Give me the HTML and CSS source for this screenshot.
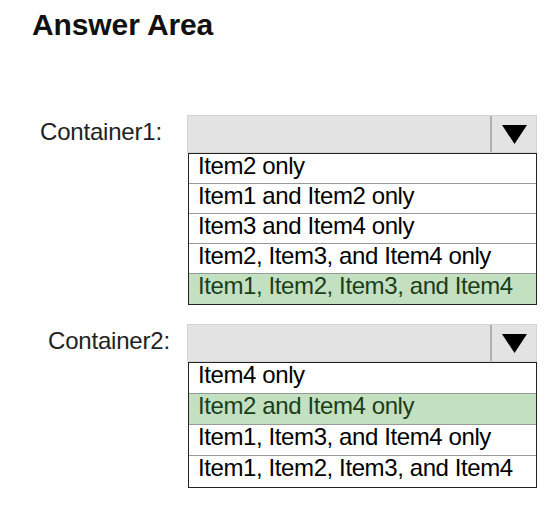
FILE: index.html
```html
<!DOCTYPE html>
<html lang="en">
<head>
  <meta charset="UTF-8" />
  <meta name="viewport" content="width=device-width, initial-scale=1.0" />
  <title>Answer Area</title>
  <link rel="stylesheet" href="styles.css">
</head>
<body>

  <!-- Title -->
  <h1 class="title">Answer Area</h1>

  <!-- Container1 -->
  <div class="field field-one">
    <div class="label label-one">Container1:</div>
    <div class="dropdown">
      <div class="select">
        <div class="select-value"></div>
        <div class="select-arrow">
          <svg width="25" height="19" viewBox="0 0 25 19"><polygon points="0,0 25,0 12.5,19" fill="#000"/></svg>
        </div>
      </div>
      <ul class="options">
        <li>Item2 only</li>
        <li>Item1 and Item2 only</li>
        <li>Item3 and Item4 only</li>
        <li>Item2, Item3, and Item4 only</li>
        <li class="picked">Item1, Item2, Item3, and Item4</li>
      </ul>
    </div>
  </div>

  <!-- Container2 -->
  <div class="field field-two">
    <div class="label label-two">Container2:</div>
    <div class="dropdown">
      <div class="select">
        <div class="select-value"></div>
        <div class="select-arrow">
          <svg width="25" height="19" viewBox="0 0 25 19"><polygon points="0,0 25,0 12.5,19" fill="#000"/></svg>
        </div>
      </div>
      <ul class="options tall">
        <li>Item4 only</li>
        <li class="picked">Item2 and Item4 only</li>
        <li>Item1, Item3, and Item4 only</li>
        <li>Item1, Item2, Item3, and Item4</li>
      </ul>
    </div>
  </div>

</body>
</html>
```

FILE: styles.css
```css
* { margin: 0; padding: 0; box-sizing: border-box; }
body { font-family: 'Liberation Sans', Arial, sans-serif; background: #fff; color: #111; width: 553px; height: 506px; }

.title { font-size: 30px; font-weight: bold; line-height: 34px; color: #111; padding: 8px 0 0 32px; letter-spacing: -0.1px; }

.field { display: flex; align-items: flex-start; }
.field-one { margin-top: 73px; }
.field-two { margin-top: 19px; }

.label { font-size: 24px; letter-spacing: -0.2px; color: #222; padding-top: 3px; }
.label-one { width: 187px; padding-left: 40px; }
.label-two { width: 187px; padding-left: 48px; }

.dropdown { width: 350px; }
.select { display: flex; height: 38px; background: #e3e3e3; border: 1px solid #d4d4d4; }
.select-value { flex: 1; border-right: 2px solid #b0b0b0; }
.select-arrow { width: 44px; display: flex; align-items: center; justify-content: center; padding-top: 1px; }

.options { list-style: none; border: 1px solid #222; margin-left: 1px; }
.options li { height: 30px; line-height: 24px; font-size: 24px; letter-spacing: -0.4px; color: #000; padding-left: 9px; border-bottom: 1px solid #9a9a9a; white-space: nowrap; }
.options li:last-child { border-bottom: none; }
.options.tall li { height: 31px; }
.options li.picked { background: #c3e0c1; color: #1b3d1b; }
```
